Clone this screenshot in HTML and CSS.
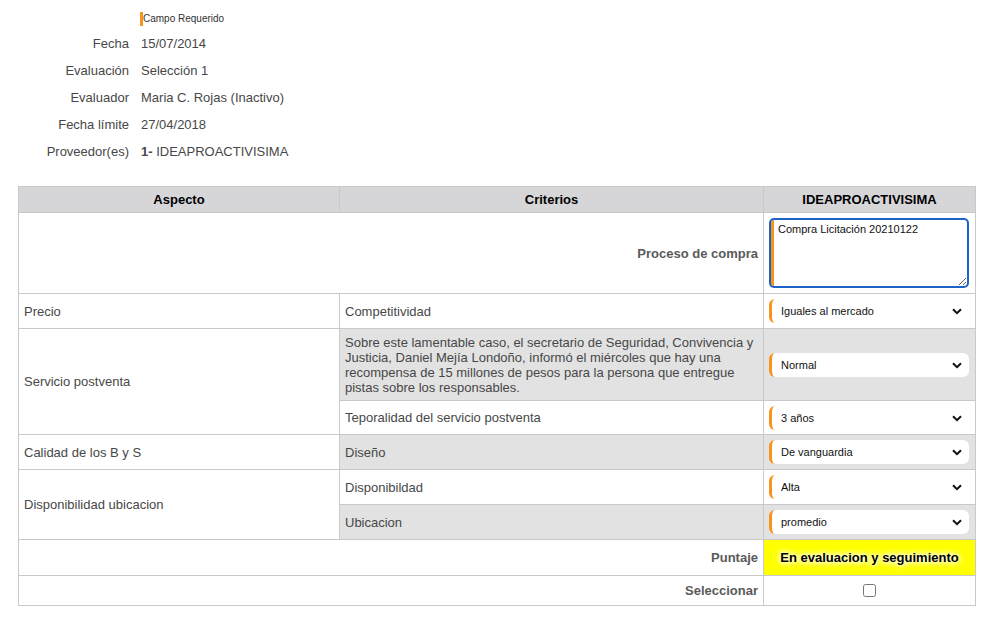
FILE: index.html
```html
<!DOCTYPE html>
<html lang="es">
<head>
<meta charset="utf-8">
<title>Evaluación</title>
<link rel="stylesheet" href="styles.css">
</head>
<body>
<div class="page">
  <div class="info">
    <div class="info-label"></div>
    <div class="required"><span class="req-bar"></span>Campo Requerido</div>
    <div class="info-label">Fecha</div><div class="info-value">15/07/2014</div>
    <div class="info-label">Evaluación</div><div class="info-value">Selección 1</div>
    <div class="info-label">Evaluador</div><div class="info-value">Maria C. Rojas (Inactivo)</div>
    <div class="info-label">Fecha límite</div><div class="info-value">27/04/2018</div>
    <div class="info-label">Proveedor(es)</div><div class="info-value"><b>1-</b> IDEAPROACTIVISIMA</div>
  </div>

  <table class="grid">
    <colgroup><col class="c1"><col class="c2"><col class="c3"></colgroup>
    <thead>
      <tr class="h-head"><th>Aspecto</th><th>Criterios</th><th>IDEAPROACTIVISIMA</th></tr>
    </thead>
    <tbody>
      <tr class="h-proc">
        <td colspan="2" class="right-label">Proceso de compra</td>
        <td class="ctrl"><textarea class="area">Compra Licitación 20210122</textarea></td>
      </tr>
      <tr class="h-35">
        <td>Precio</td>
        <td>Competitividad</td>
        <td class="ctrl"><span class="sel"><select><option>Iguales al mercado</option></select><svg class="chev" viewBox="0 0 10 7" width="10" height="7"><path d="M1 1.2 L5 5.2 L9 1.2" fill="none" stroke="#111" stroke-width="2"/></svg></span></td>
      </tr>
      <tr class="h-72 grey">
        <td rowspan="2" class="white">Servicio postventa</td>
        <td class="para">Sobre este lamentable caso, el secretario de Seguridad, Convivencia y Justicia, Daniel Mejía Londoño, informó el miércoles que hay una recompensa de 15 millones de pesos para la persona que entregue pistas sobre los responsables.</td>
        <td class="ctrl"><span class="sel"><select><option>Normal</option></select><svg class="chev" viewBox="0 0 10 7" width="10" height="7"><path d="M1 1.2 L5 5.2 L9 1.2" fill="none" stroke="#111" stroke-width="2"/></svg></span></td>
      </tr>
      <tr class="h-34">
        <td>Teporalidad del servicio postventa</td>
        <td class="ctrl"><span class="sel"><select><option>3 años</option></select><svg class="chev" viewBox="0 0 10 7" width="10" height="7"><path d="M1 1.2 L5 5.2 L9 1.2" fill="none" stroke="#111" stroke-width="2"/></svg></span></td>
      </tr>
      <tr class="h-35 grey">
        <td class="white">Calidad de los B y S</td>
        <td>Diseño</td>
        <td class="ctrl"><span class="sel"><select><option>De vanguardia</option></select><svg class="chev" viewBox="0 0 10 7" width="10" height="7"><path d="M1 1.2 L5 5.2 L9 1.2" fill="none" stroke="#111" stroke-width="2"/></svg></span></td>
      </tr>
      <tr class="h-35">
        <td rowspan="2">Disponibilidad ubicacion</td>
        <td>Disponibildad</td>
        <td class="ctrl"><span class="sel"><select><option>Alta</option></select><svg class="chev" viewBox="0 0 10 7" width="10" height="7"><path d="M1 1.2 L5 5.2 L9 1.2" fill="none" stroke="#111" stroke-width="2"/></svg></span></td>
      </tr>
      <tr class="h-35 grey">
        <td>Ubicacion</td>
        <td class="ctrl"><span class="sel"><select><option>promedio</option></select><svg class="chev" viewBox="0 0 10 7" width="10" height="7"><path d="M1 1.2 L5 5.2 L9 1.2" fill="none" stroke="#111" stroke-width="2"/></svg></span></td>
      </tr>
      <tr class="h-36">
        <td colspan="2" class="right-label">Puntaje</td>
        <td class="score">En evaluacion y seguimiento</td>
      </tr>
      <tr class="h-30">
        <td colspan="2" class="right-label">Seleccionar</td>
        <td class="check"><input type="checkbox"></td>
      </tr>
    </tbody>
  </table>
</div>
</body>
</html>
```

FILE: styles.css
```css
html, body {
  margin: 0;
  padding: 0;
  background: #fff;
}
body {
  font-family: "Liberation Sans", Arial, Helvetica, sans-serif;
  font-size: 13px;
  color: #474747;
}
.page {
  padding: 9px 14px 0 18px;
}
.info {
  display: grid;
  grid-template-columns: 111px auto;
  column-gap: 12px;
  grid-auto-rows: 27px;
  grid-template-rows: 21px;
  align-items: center;
}
.info-label {
  text-align: right;
}
.info-value b {
  font-weight: bold;
}
.required {
  display: flex;
  align-items: center;
  font-size: 10px;
  color: #333;
  margin-left: -1px;
  margin-top: -2px;
}
.req-bar {
  display: inline-block;
  width: 3px;
  height: 14px;
  background: #f7941d;
}
.grid {
  margin-top: 21px;
  width: 957px;
  border-collapse: collapse;
  table-layout: fixed;
}
.c1 { width: 321px; }
.c2 { width: 424px; }
.c3 { width: 212px; }
.grid th, .grid td {
  border: 1px solid #c9c9c9;
  padding: 0 5px;
  vertical-align: middle;
  text-align: left;
}
.grid th {
  background: #d6d6d9;
  color: #000;
  font-weight: bold;
  text-align: center;
  font-size: 13px;
}
.h-head { height: 26px; }
.h-proc { height: 81px; }
.h-35 { height: 35px; }
.h-34 { height: 34px; }
.h-36 { height: 36px; }
.h-30 { height: 30px; }
.h-72 { height: 72px; }
.grey td { background: #e2e2e2; }
.grey td.white { background: #fff; }
.para {
  line-height: 15px;
  padding-top: 3px;
  padding-bottom: 3px;
}
.right-label {
  text-align: right !important;
  font-weight: bold;
  color: #5a5a5a;
}
.ctrl {
  padding: 0 5px !important;
}
.sel {
  position: relative;
  display: block;
  width: 200px;
  height: 24px;
}
.sel select {
  appearance: none;
  -webkit-appearance: none;
  display: block;
  width: 200px;
  height: 24px;
  margin: 0;
  border: none;
  border-left: 3px solid #f7941d;
  border-radius: 6px;
  background: #fff;
  padding: 0 20px 0 9px;
  font-family: "Liberation Sans", Arial, sans-serif;
  font-size: 11px;
  color: #111;
  outline: none;
}
.chev {
  position: absolute;
  right: 7px;
  top: 9px;
  pointer-events: none;
}
.area {
  display: block;
  box-sizing: border-box;
  width: 196px;
  height: 66px;
  margin: 2px 2px;
  border: none;
  border-left: 3px solid #f7941d;
  border-radius: 3px;
  outline: 2px solid #1b63c9;
  outline-offset: 0;
  padding: 3px 4px;
  font-family: "Liberation Sans", Arial, sans-serif;
  font-size: 11px;
  color: #111;
  background: #fff;
}
.score {
  background: #ffff00;
  color: #000;
  font-weight: bold;
  text-align: center !important;
  text-shadow: 0 0 4px #fff, 0 0 6px #fff, 0 0 8px #fff;
}
.check {
  text-align: center !important;
}
.check input {
  margin: 3px 0 0 0;
  width: 13px;
  height: 13px;
}
```
